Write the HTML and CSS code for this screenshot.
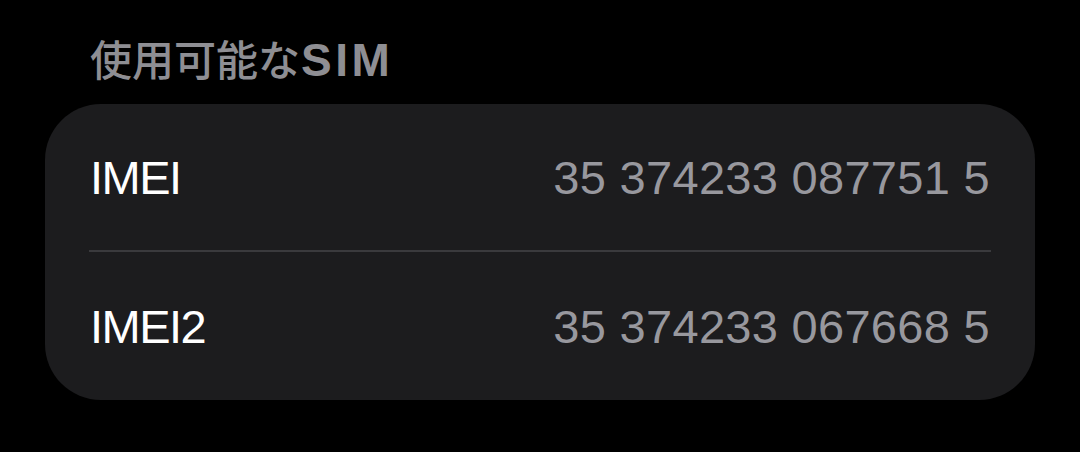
FILE: index.html
```html
<!DOCTYPE html>
<html lang="ja">
<head>
<meta charset="utf-8">
<link rel="stylesheet" href="styles.css">
</head>
<body>
<div class="page">
  <div class="section-title">使用可能な<span class="latin">SIM</span></div>
  <div class="card">
    <div class="row">
      <span class="label">IMEI</span>
      <span class="value">35 374233 087751 5</span>
    </div>
    <div class="sep"></div>
    <div class="row">
      <span class="label">IMEI2</span>
      <span class="value">35 374233 067668 5</span>
    </div>
  </div>
</div>
</body>
</html>
```
FILE: styles.css
```css
html, body {
  margin: 0;
  padding: 0;
  background: #000;
}
.page {
  width: 1080px;
  height: 452px;
  padding-top: 30px;
  box-sizing: border-box;
  font-family: "Liberation Sans", "Noto Sans CJK JP", sans-serif;
}
.section-title {
  padding-left: 90px;
  font-family: "Noto Sans CJK JP", sans-serif;
  font-size: 42px;
  font-weight: 500;
  line-height: 56px;
  color: #8e8e93;
  height: 74px;
}
.section-title .latin {
  font-family: "Liberation Sans", sans-serif;
  font-weight: 700;
  font-size: 46px;
  letter-spacing: 3.5px;
  margin-left: 1px;
}
.card {
  margin: 0 45px;
  background: #1c1c1e;
  border-radius: 56px;
  display: flex;
  flex-direction: column;
}
.row {
  height: 146px;
  display: flex;
  align-items: center;
  justify-content: space-between;
  padding: 0 45px;
}
.row + .sep + .row {
  height: 148px;
}
.label {
  font-size: 47px;
  color: #ffffff;
  letter-spacing: -1.5px;
}
.value {
  font-size: 47px;
  color: #98989e;
  letter-spacing: 0.3px;
}
.sep {
  height: 2px;
  background: #3a3a3d;
  margin: 0 44px;
}
```
